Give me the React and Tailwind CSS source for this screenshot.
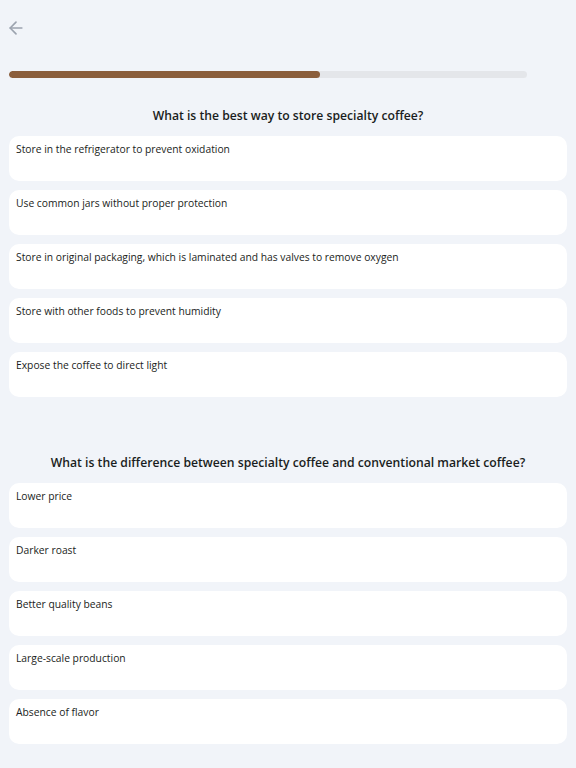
import React from 'react';
import { ArrowLeft } from 'lucide-react';

const questions = [
    {
        id: 1,
        title: 'What is the best way to store specialty coffee?',
        options: [
            'Store in the refrigerator to prevent oxidation',
            'Use common jars without proper protection',
            'Store in original packaging, which is laminated and has valves to remove oxygen',
            'Store with other foods to prevent humidity',
            'Expose the coffee to direct light',
        ],
    },
    {
        id: 2,
        title: 'What is the difference between specialty coffee and conventional market coffee?',
        options: [
            'Lower price',
            'Darker roast',
            'Better quality beans',
            'Large-scale production',
            'Absence of flavor',
        ],
    },
];

export default function App() {
    const progress = 60;

    return (
        <div className="min-h-screen bg-[#f1f4f9] px-[9px] pb-6 text-[#1f2328]" style={{ fontFamily: '"Open Sans", "Noto Sans", sans-serif' }}>
            <div className="pt-[18px]">
                <button className="-ml-[3px] text-[#9ca3af] block">
                    <ArrowLeft className="w-5 h-5" strokeWidth={2} />
                </button>
            </div>

            <div className="mt-[33px] w-[518px] h-[7px] rounded-full bg-[#e4e6ea] overflow-hidden">
                <div className="h-full rounded-full bg-[#8b5e3c]" style={{ width: `${progress}%` }} />
            </div>

            {questions.map((q, qi) => (
                <section key={q.id} className={qi === 0 ? 'mt-[28px]' : 'mt-[56px]'}>
                    <h2 className="text-center text-[12.2px] font-semibold leading-5 text-[#1a1d21]">{q.title}</h2>
                    <div className="mt-[10px] flex flex-col gap-[9px]">
                        {q.options.map((opt) => (
                            <button
                                key={opt}
                                className="w-full h-[45px] bg-white rounded-[10px] px-[7px] pt-[5px] text-left text-[10.3px] leading-4 text-[#1a1d21] flex items-start"
                            >
                                {opt}
                            </button>
                        ))}
                    </div>
                </section>
            ))}
        </div>
    );
}
